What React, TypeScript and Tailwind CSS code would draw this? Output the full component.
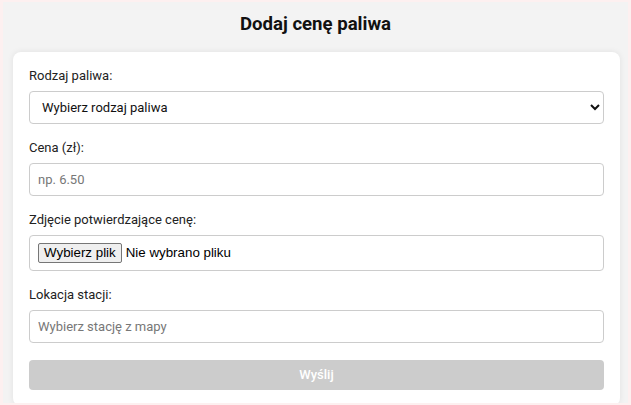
export default function App() {
  return (
    <div className="h-[405px] w-[631px] overflow-hidden bg-[#fdf0f0] px-[3px] pt-[2px] pb-[2px] font-['Roboto',sans-serif]">
      <div className="h-full overflow-hidden bg-[#f3f3f3]">
        {/* Header */}
        <h1 className="flex h-[45px] items-center justify-center pt-[1px] text-[18.6px] font-bold text-[#111]">
          Dodaj cenę paliwa
        </h1>

        {/* Form card */}
        <div className="ml-[10px] mr-[8px] mt-[5px] rounded-lg bg-white p-4 shadow-[0_0_6px_rgba(0,0,0,0.08)]">
          <div className="flex flex-col gap-4">
            <div>
              <label className="mb-[7px] block h-4 text-[13px] leading-4 text-[#222]">
                Rodzaj paliwa:
              </label>
              <select className="h-[33px] w-full rounded border border-[#ccc] bg-white px-2 text-[13px] text-[#111] outline-none">
                <option>Wybierz rodzaj paliwa</option>
                <option>Pb95</option>
                <option>Pb98</option>
                <option>ON</option>
                <option>LPG</option>
              </select>
            </div>

            <div>
              <label className="mb-[7px] block h-4 text-[13px] leading-4 text-[#222]">
                Cena (zł):
              </label>
              <input
                type="text"
                placeholder="np. 6.50"
                className="h-[33px] w-full rounded border border-[#ccc] px-2 text-[13px] text-[#111] outline-none placeholder:text-[#777]"
              />
            </div>

            <div>
              <label className="mb-[7px] block h-4 text-[13px] leading-4 text-[#222]">
                Zdjęcie potwierdzające cenę:
              </label>
              <div className="flex h-[36px] w-full items-center rounded border border-[#ccc] px-2 font-['Liberation_Sans',Arial,sans-serif] text-[13.33px] text-black">
                <span className="flex h-[20px] items-center rounded-[2px] border border-[#767676] bg-[#efefef] px-[5px] leading-none">
                  Wybierz plik
                </span>
                <span className="ml-[4px]">Nie wybrano pliku</span>
              </div>
            </div>

            <div>
              <label className="mb-[7px] block h-4 text-[13px] leading-4 text-[#222]">
                Lokacja stacji:
              </label>
              <input
                type="text"
                readOnly
                placeholder="Wybierz stację z mapy"
                className="h-[33px] w-full rounded border border-[#ccc] px-2 text-[13px] text-[#111] outline-none placeholder:text-[#777]"
              />
            </div>

            <button
              disabled
              className="mt-[1px] h-[30px] w-full rounded bg-[#ccc] text-[13px] font-medium text-white"
            >
              Wyślij
            </button>
          </div>
        </div>
      </div>
    </div>
  );
}
